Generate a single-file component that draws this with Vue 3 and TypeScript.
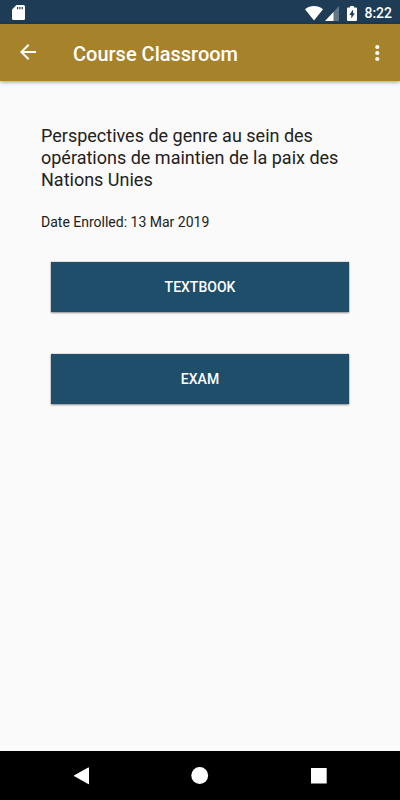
<script setup lang="ts">
interface Action {
  id: string
  label: string
}

const time = '8:22'
const screenTitle = 'Course Classroom'
const courseName = 'Perspectives de genre au sein des opérations de maintien de la paix des Nations Unies'
const enrolled = '13 Mar 2019'
const actions: Action[] = [
  { id: 'textbook', label: 'TEXTBOOK' },
  { id: 'exam', label: 'EXAM' },
]
</script>

<template>
  <div class="screen">
    <div class="status-bar">
      <svg class="sd-card" width="14" height="16" viewBox="0 0 14 16" aria-hidden="true">
        <path fill="#fff" d="M4.500 0h7a1.500 1.500 0 0 1 1.500 1.500v12a1.500 1.500 0 0 1-1.500 1.500H1.500A1.500 1.500 0 0 1 0 13.500V4.500z" />
        <path fill="#1e3c55" d="M5 2h1.200v2.200H5zM7.300 2h1.200v2.200H7.300zM9.600 2h1.200v2.200H9.600z" />
      </svg>
      <div class="status-icons">
        <svg width="18" height="15" viewBox="0 0 18 15" aria-hidden="true">
          <path fill="#fff" d="M0 3.200C5.300-1 12.700-1 18 3.200L9 14.400z" />
        </svg>
        <svg width="14" height="15" viewBox="0 0 14 15" aria-hidden="true">
          <path fill="#fff" fill-opacity=".3" d="M14 0v15H0z" />
          <path fill="#fff" d="M8.500 6v9H0z" />
        </svg>
        <svg class="battery" width="10" height="15" viewBox="0 0 10 15" aria-hidden="true">
          <path fill="#fff" d="M3 0h4v1.500h2a1 1 0 0 1 1 1V14a1 1 0 0 1-1 1H1a1 1 0 0 1-1-1V2.500a1 1 0 0 1 1-1h2z" />
          <path fill="#1e3c55" d="M6 3.500v3.700h1.800L4.300 12.500V9H2.300z" />
        </svg>
        <span class="time">{{ time }}</span>
      </div>
    </div>

    <header class="app-bar">
      <button class="icon-button" type="button" aria-label="Back">
        <svg width="24" height="24" viewBox="0 0 24 24" aria-hidden="true">
          <path fill="#fff" d="M20 11H7.830l5.590-5.590L12 4l-8 8 8 8 1.410-1.410L7.830 13H20v-2z" />
        </svg>
      </button>
      <h1 class="title">{{ screenTitle }}</h1>
      <button class="icon-button menu" type="button" aria-label="More options">
        <svg width="24" height="24" viewBox="0 0 24 24" aria-hidden="true">
          <g fill="#fff">
            <circle cx="12.300" cy="7" r="2.100" />
            <circle cx="12.300" cy="13" r="2.100" />
            <circle cx="12.300" cy="19" r="2.100" />
          </g>
        </svg>
      </button>
    </header>

    <main class="content">
      <h2 class="course">{{ courseName }}</h2>
      <p class="enrolled">Date Enrolled: {{ enrolled }}</p>
      <div class="actions">
        <button v-for="action in actions" :key="action.id" class="action" type="button">
          {{ action.label }}
        </button>
      </div>
    </main>

    <nav class="nav-bar">
      <button class="nav-button" type="button" aria-label="Back">
        <svg width="18" height="18" viewBox="0 0 18 18" aria-hidden="true">
          <path fill="#fff" d="M17 .900v15.800a.500.500 0 0 1-.800.400L2.300 9.300a.600.600 0 0 1 0-1L16.200.500a.500.500 0 0 1 .800.400z" />
        </svg>
      </button>
      <button class="nav-button" type="button" aria-label="Home">
        <svg width="18" height="18" viewBox="0 0 18 18" aria-hidden="true">
          <circle cx="8.700" cy="8.500" r="8.400" fill="#fff" />
        </svg>
      </button>
      <button class="nav-button" type="button" aria-label="Recent apps">
        <svg width="18" height="18" viewBox="0 0 18 18" aria-hidden="true">
          <rect x="1" y="1" width="15.700" height="15.500" fill="#fff" />
        </svg>
      </button>
    </nav>
  </div>
</template>

<style>
body {
  background: #fafafa;
}
</style>

<style scoped>
.screen {
  display: flex;
  flex-direction: column;
  min-height: 100vh;
  background: #fafafa;
  color: #212121;
  font-family: Roboto, "Liberation Sans", sans-serif;
}

button {
  border: 0;
  padding: 0;
  font-family: inherit;
  cursor: pointer;
}

svg {
  display: block;
}

.status-bar {
  display: flex;
  align-items: center;
  justify-content: space-between;
  box-sizing: border-box;
  height: 24px;
  padding: 2px 8px 0 12px;
  background: #1e3c55;
}

.status-icons {
  display: flex;
  align-items: center;
  gap: 2px;
}

.battery {
  margin-left: 6px;
}

.time {
  margin-left: 5px;
  color: #fff;
  font-size: 14px;
  font-weight: 500;
  line-height: 22px;
}

.app-bar {
  display: flex;
  align-items: flex-start;
  height: 57px;
  background: #a6822b;
  box-shadow: 0 1px 4px rgba(0, 0, 0, 0.4);
}

.icon-button {
  display: flex;
  align-items: center;
  justify-content: center;
  width: 56px;
  height: 56px;
  background: transparent;
}

.menu {
  width: 46px;
}

.title {
  flex: 1;
  margin: 0;
  padding: 18px 0 0 17px;
  color: #fff;
  font-size: 20px;
  font-weight: 500;
  line-height: 24px;
}

.content {
  flex: 1;
  padding: 44px 41px;
}

.course {
  margin: 0;
  font-size: 18px;
  font-weight: 400;
  line-height: 22px;
}

.enrolled {
  margin: 23px 0 0;
  font-size: 14px;
  line-height: 16px;
}

.actions {
  display: flex;
  flex-direction: column;
  gap: 42px;
  padding: 32px 10px 0;
}

.action {
  height: 50px;
  background: #1f4e6b;
  box-shadow: 0 0 1px rgba(0, 0, 0, 0.4), 0 1px 2px rgba(0, 0, 0, 0.4);
  color: #fff;
  font-size: 14px;
  font-weight: 500;
}

.nav-bar {
  display: flex;
  justify-content: center;
  height: 49px;
  background: #000;
}

.nav-button {
  display: flex;
  align-items: center;
  justify-content: center;
  width: 119px;
  background: transparent;
}
</style>
